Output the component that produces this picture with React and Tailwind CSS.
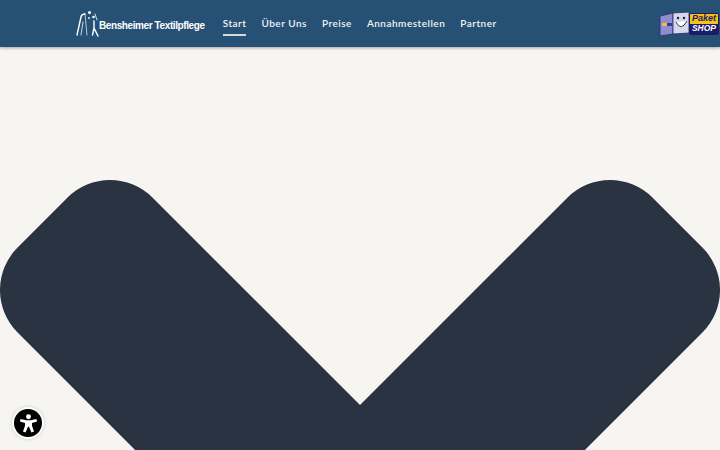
import React from "react";

function Logo() {
  return (
    <svg width="23" height="28" viewBox="0 0 23 28" className="shrink-0">
      <g fill="none" stroke="#fff" strokeLinecap="round">
        <path d="M1 25 L5 7 Q5.5 4 9 4" strokeWidth="1.4" />
        <path d="M9 4 L11 25" strokeWidth="0.9" opacity="0.75" />
        <path d="M5 25 L7 12" strokeWidth="1" opacity="0.8" />
        <path d="M18 11 L18 18 L22 26 M18 18 L16.5 25" strokeWidth="1.4" />
        <path d="M19 4 L21 10" strokeWidth="0.8" />
      </g>
      <circle cx="13.5" cy="2.5" r="1.5" fill="#fff" />
      <circle cx="17.5" cy="7" r="1.3" fill="#fff" />
      <circle cx="13" cy="8" r="1" fill="#fff" opacity="0.85" />
    </svg>
  );
}

function PaketShop() {
  return (
    <div className="relative h-[26px] w-[60px] shrink-0">
      <svg width="32" height="26" viewBox="0 0 32 26" className="absolute left-0 top-0">
        <path d="M1 5 L14 2 L14 23 L1 25 Z" fill="#8d8dcf" stroke="#2a2a6a" strokeWidth="0.8" />
        <path d="M14 2 L30 1 L30 22 L14 23 Z" fill="#d5d8ec" stroke="#2a2a6a" strokeWidth="0.8" />
        <rect x="3" y="12" width="5" height="3" fill="#e8c23a" />
        <rect x="8" y="12" width="5" height="3" fill="#3c3a8c" />
        <circle cx="19" cy="7" r="1.2" fill="#222" />
        <circle cx="25" cy="7" r="1.2" fill="#222" />
        <path d="M17 11 Q22 21 28 10" fill="#fff" stroke="#222" strokeWidth="0.9" />
      </svg>
      <div className="absolute right-0 top-[2px] flex h-[22px] w-[30px] flex-col overflow-hidden rounded-[2px] border border-[#1d1a6b]">
        <div className="flex h-[10px] items-center justify-center bg-[#f5c21b] text-[9px] font-bold italic leading-none text-[#1d1a6b] [font-family:'Liberation_Sans',sans-serif]">
          Paket
        </div>
        <div className="flex h-[10px] items-center justify-center bg-[#1d1a6b] text-[8.5px] font-bold italic leading-none text-white [font-family:'Liberation_Sans',sans-serif]">
          SHOP
        </div>
      </div>
    </div>
  );
}

export default function App() {
  const nav = ["Über Uns", "Preise", "Annahmestellen", "Partner"];
  return (
    <div className="relative h-[450px] w-[720px] overflow-hidden bg-[#f7f5f2]">
      <header className="flex h-[47px] items-center justify-between bg-[#265175] pl-[76px] pr-[1px] shadow-[0_1px_3px_rgba(0,0,0,0.35)]">
        <div className="flex items-center">
          <div className="flex items-center">
            <Logo />
            <span className="mt-[4px] text-[10px] font-bold tracking-[-0.4px] text-white [font-family:'Liberation_Sans',sans-serif]">
              Bensheimer Textilpflege
            </span>
          </div>
          <nav className="ml-[18px] flex items-center gap-[15px] text-[10px] font-semibold tracking-[0.5px] text-[#f2f4f6] [font-family:'Lato',sans-serif]">
            <span className="border-b-2 border-[#d3dade] pb-[3px] pt-[5px]">Start</span>
            {nav.map((n) => (
              <span key={n}>{n}</span>
            ))}
          </nav>
        </div>
        <PaketShop />
      </header>
      <svg viewBox="0 0 720 720" className="block w-full">
        <path
          d="M360 405 L567.57 197.57 A60 60 0 0 1 652.43 197.57 L702.43 247.57 A60 60 0 0 1 702.43 332.43 L360 675 L17.57 332.43 A60 60 0 0 1 17.57 247.57 L67.57 197.57 A60 60 0 0 1 152.43 197.57 Z"
          fill="#2a3342"
          transform="translate(0 -47)"
        />
      </svg>
      <div className="fixed bottom-[13px] left-[14px] flex h-[28px] w-[28px] items-center justify-center rounded-full bg-black ring-2 ring-white shadow-[0_0_5px_rgba(0,0,0,0.45)]">
        <svg width="21" height="21" viewBox="0 0 24 24" fill="#fff">
          <circle cx="12" cy="4.3" r="2.8" />
          <path d="M3 6.8 L9.5 8.4 H14.5 L21 6.8 L21.8 9.6 L16 11.4 L16 14.5 L18.3 21.2 L15.4 22.3 L12.6 15.8 H11.4 L8.6 22.3 L5.7 21.2 L8 14.5 L8 11.4 L2.2 9.6 Z" />
        </svg>
      </div>
    </div>
  );
}
